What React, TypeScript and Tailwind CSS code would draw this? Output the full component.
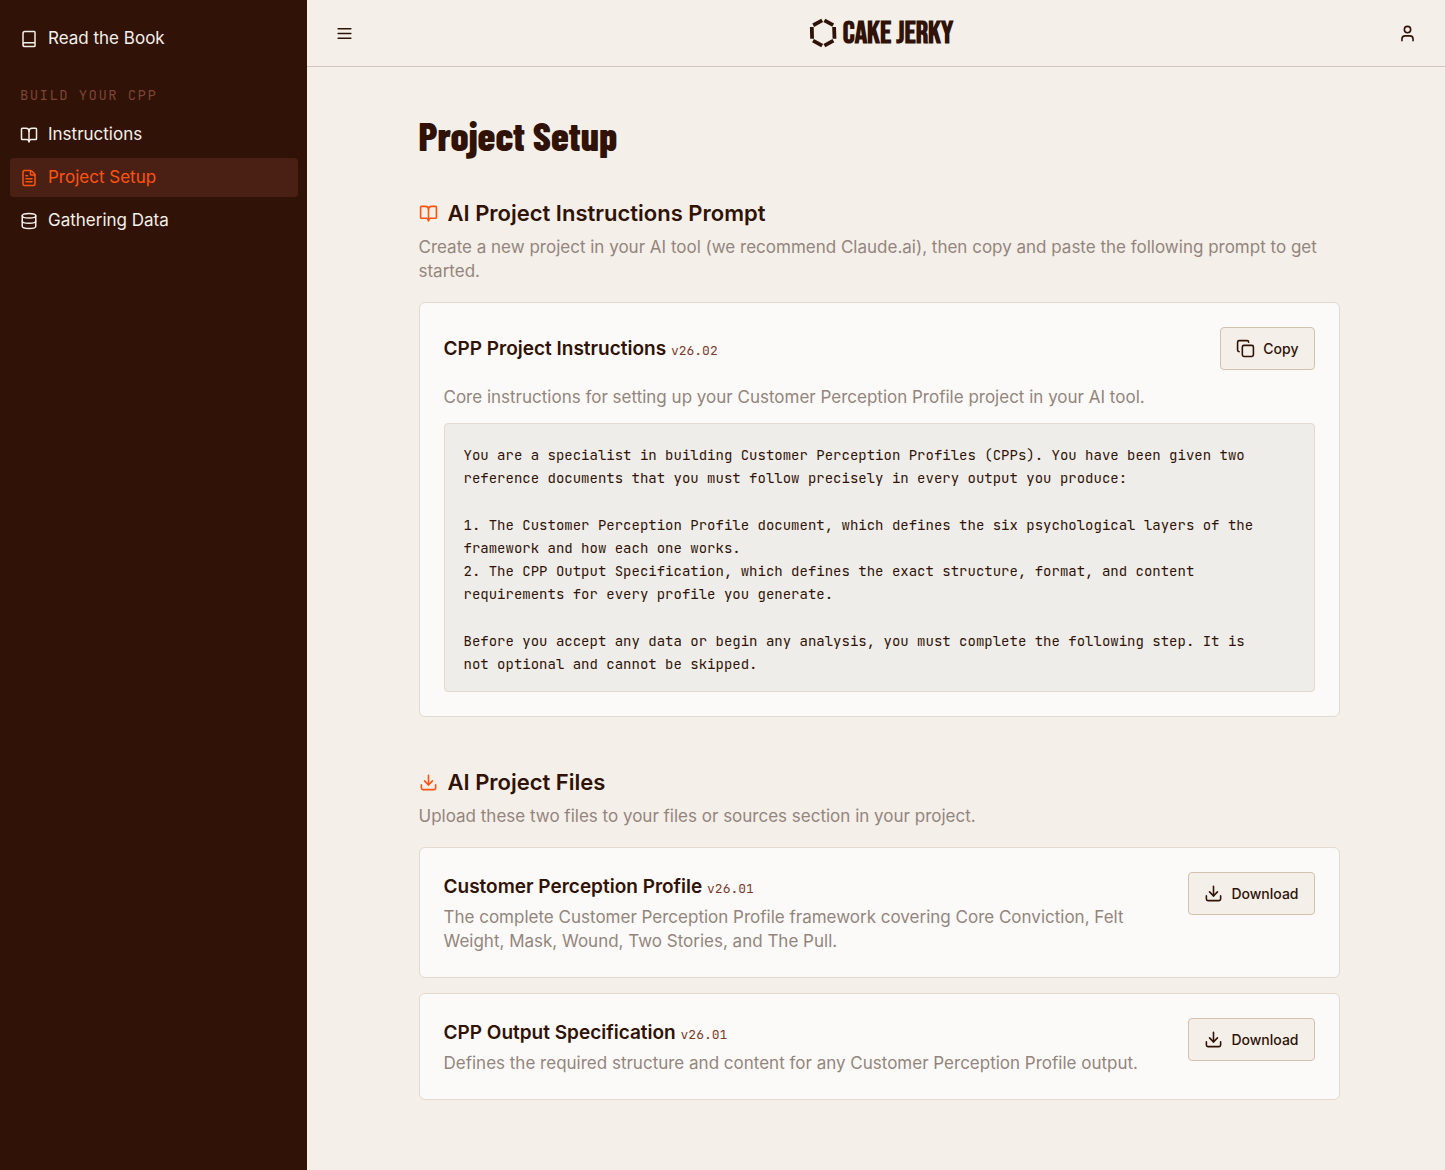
import { useState } from 'react';
import { Book, BookOpen, Copy, Database, Download, FileText, User } from 'lucide-react';
import type { LucideIcon } from 'lucide-react';
import clsx from 'clsx';

type NavItem = { label: string; icon: LucideIcon };
type ProjectFile = { name: string; version: string; description: string };

const buildItems: NavItem[] = [
  { label: 'Instructions', icon: BookOpen },
  { label: 'Project Setup', icon: FileText },
  { label: 'Gathering Data', icon: Database },
];

const files: ProjectFile[] = [
  {
    name: 'Customer Perception Profile',
    version: 'v26.01',
    description:
      'The complete Customer Perception Profile framework covering Core Conviction, Felt Weight, Mask, Wound, Two Stories, and The Pull.',
  },
  {
    name: 'CPP Output Specification',
    version: 'v26.01',
    description: 'Defines the required structure and content for any Customer Perception Profile output.',
  },
];

const promptBlocks = [
  `You are a specialist in building Customer Perception Profiles (CPPs). You have been given two
reference documents that you must follow precisely in every output you produce:`,
  `1. The Customer Perception Profile document, which defines the six psychological layers of the
framework and how each one works.
2. The CPP Output Specification, which defines the exact structure, format, and content
requirements for every profile you generate.`,
  `Before you accept any data or begin any analysis, you must complete the following step. It is
not optional and cannot be skipped.`,
];

function NavLink({ item, active, onClick }: { item: NavItem; active?: boolean; onClick?: () => void }) {
  const Icon = item.icon;
  return (
    <a
      href="#"
      onClick={onClick}
      aria-current={active ? 'page' : undefined}
      className={clsx(
        'flex h-[39px] items-center gap-2.5 rounded px-2.5 text-[17px] leading-[25px]',
        active ? 'bg-[#4a2015] text-[#ff5310]' : 'text-[#f4efe9] hover:bg-[#4a2015]'
      )}
    >
      <Icon size={18} className="shrink-0" />
      {item.label}
    </a>
  );
}

function Logo() {
  return (
    <a href="#" className="flex items-center gap-1.5" aria-label="Cake Jerky">
      <svg width="28" height="30" viewBox="0 0 28 30" stroke="#301206" strokeWidth="3.8" fill="none">
        <path d="M13.2 2.4 4.2 7.2M15.4 2.4l8.8 4.8M2.8 9l.3 11.8M25.1 9l.4 11.8M4 22.6l9.2 5.1M24.4 22.6l-9 5.1" />
      </svg>
      <span className="pt-0.5 font-['Bebas_Neue',sans-serif] text-[31px] leading-8 font-bold">CAKE JERKY</span>
    </a>
  );
}

function Version({ children }: { children: string }) {
  return (
    <span className="font-['JetBrains_Mono','DejaVu_Sans_Mono',monospace] text-[13px] leading-none font-normal text-[#7c3a2a]">
      {children}
    </span>
  );
}

function ActionButton({ icon: Icon, label, onClick }: { icon: LucideIcon; label: string; onClick?: () => void }) {
  return (
    <button
      onClick={onClick}
      className="flex h-[43px] shrink-0 items-center gap-2 rounded border border-[#d3c1b0] bg-[#f4efe9] px-[15px] text-sm font-medium hover:bg-[#ebe4da]"
    >
      <Icon size={19} />
      {label}
    </button>
  );
}

function SectionHeading({ icon: Icon, title, text }: { icon: LucideIcon; title: string; text: string }) {
  return (
    <div>
      <h2 className="flex items-center gap-2.5 text-[22px] leading-8 font-semibold">
        <Icon size={19} className="text-[#ff5310]" />
        {title}
      </h2>
      <p className="mt-1.5 text-[17px] leading-6 text-[#93857d]">{text}</p>
    </div>
  );
}

export default function App() {
  const [current, setCurrent] = useState('Project Setup');
  const [sidebarOpen, setSidebarOpen] = useState(true);

  const copyPrompt = () => navigator.clipboard.writeText(promptBlocks.join('\n\n'));

  return (
    <div className="flex min-h-screen bg-[#f4efe9] font-['Inter',sans-serif] text-[#301206]">
      {sidebarOpen && (
        <aside className="w-[307px] shrink-0 bg-[#301206] py-[19px] pr-[9px] pl-2.5">
          <nav>
            <NavLink item={{ label: 'Read the Book', icon: Book }} />
            <p className="mt-[27px] mb-2.5 px-2.5 font-['JetBrains_Mono','DejaVu_Sans_Mono',monospace] text-sm tracking-widest text-[#7c4434]">
              BUILD YOUR CPP
            </p>
            <div className="flex flex-col gap-1">
              {buildItems.map((item) => (
                <NavLink
                  key={item.label}
                  item={item}
                  active={item.label === current}
                  onClick={() => setCurrent(item.label)}
                />
              ))}
            </div>
          </nav>
        </aside>
      )}

      <div className="flex min-w-0 flex-1 flex-col">
        <header className="flex h-[67px] items-center justify-between border-b border-[#d3c4bb] px-7">
          <button aria-label="Toggle menu" className="pr-2.5" onClick={() => setSidebarOpen(!sidebarOpen)}>
            <svg width="19" height="19" viewBox="0 0 24 24" stroke="currentColor" strokeWidth="2" strokeLinecap="round">
              <path d="M4 6h16M4 12h16M4 18h16" />
            </svg>
          </button>
          <Logo />
          <button aria-label="Account">
            <User size={19} />
          </button>
        </header>

        <main className="flex-1 pt-11 pr-6 pb-16 pl-[30px]">
          <div className="mx-auto max-w-[921px]">
            <h1 className="font-['Barlow_Condensed','Roboto_Condensed',sans-serif] text-[40px] leading-12 font-extrabold">
              Project Setup
            </h1>

            <section className="mt-[38px]">
              <SectionHeading
                icon={BookOpen}
                title="AI Project Instructions Prompt"
                text="Create a new project in your AI tool (we recommend Claude.ai), then copy and paste the following prompt to get started."
              />
              <div className="mt-[19px] rounded-md border border-[#e3d9cf] bg-[#fbfaf8] p-6">
                <div className="flex items-center justify-between">
                  <h3 className="text-[19px] leading-[29px] font-semibold">
                    CPP Project Instructions <Version>v26.02</Version>
                  </h3>
                  <ActionButton icon={Copy} label="Copy" onClick={copyPrompt} />
                </div>
                <p className="mt-[15px] text-[17px] leading-6 text-[#93857d]">
                  Core instructions for setting up your Customer Perception Profile project in your AI tool.
                </p>
                <div className="mt-3.5 flex flex-col gap-6 rounded border border-[#e3d9cf] bg-[#eeede9] px-[19px] pt-5 pb-[15px] font-['JetBrains_Mono','DejaVu_Sans_Mono',monospace] text-sm leading-[23px]">
                  {promptBlocks.map((block) => (
                    <p key={block} className="whitespace-pre-line">{block}</p>
                  ))}
                </div>
              </div>
            </section>

            <section className="mt-[49px]">
              <SectionHeading
                icon={Download}
                title="AI Project Files"
                text="Upload these two files to your files or sources section in your project."
              />
              <div className="mt-[19px] flex flex-col gap-[15px]">
                {files.map((file) => (
                  <div
                    key={file.name}
                    className="flex items-start justify-between gap-8 rounded-md border border-[#e3d9cf] bg-[#fbfaf8] p-6"
                  >
                    <div>
                      <h3 className="text-[19px] leading-[29px] font-semibold">
                        {file.name} <Version>{file.version}</Version>
                      </h3>
                      <p className="mt-1 text-[17px] leading-6 text-[#93857d]">{file.description}</p>
                    </div>
                    <ActionButton icon={Download} label="Download" />
                  </div>
                ))}
              </div>
            </section>
          </div>
        </main>
      </div>
    </div>
  );
}
